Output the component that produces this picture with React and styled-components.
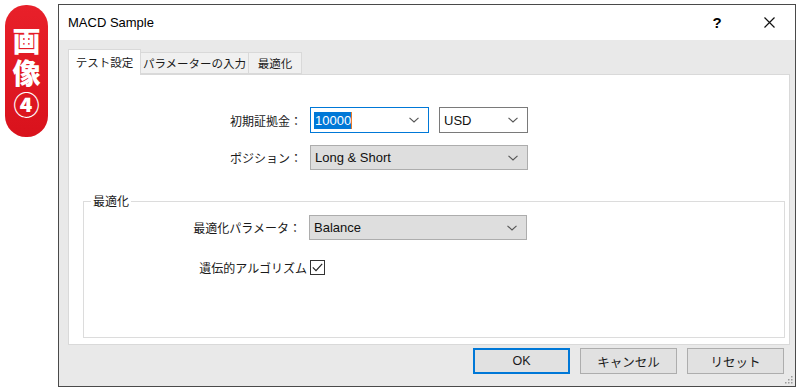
import React from "react";
import styled, { createGlobalStyle } from "styled-components";

const GlobalStyle = createGlobalStyle`
    body {
        margin: 0;
        background: #ffffff;
        font-family: "Liberation Sans", "Noto Sans CJK JP", sans-serif;
        color: #1a1a1a;
    }
`;

const Page = styled.div`
    display: flex;
    align-items: flex-start;
    padding: 4px 0 0 5px;
    gap: 10px;
    width: 800px;
    height: 391px;
    box-sizing: border-box;
`;

const Badge = styled.div`
    margin-top: 1px;
    width: 43px;
    height: 132px;
    border-radius: 21px;
    background: linear-gradient(#e8202a, #d9121c);
    color: #ffffff;
    display: flex;
    flex-direction: column;
    align-items: center;
    justify-content: center;
    gap: 2px;
    font-family: "Noto Sans CJK JP", sans-serif;
    font-weight: 900;
    font-size: 28px;
    line-height: 30px;
    padding-top: 2px;
    box-sizing: border-box;
`;

const BadgeChar = styled.span`
    display: block;
    height: 30px;
    font-size: ${(p) => p.$size ?? 28}px;
`;

const Window = styled.div`
    position: relative;
    width: 738px;
    height: 383px;
    border: 1px solid #4a4a4a;
    box-sizing: border-box;
    display: flex;
    flex-direction: column;
    background: #e9e9e9;
`;

const TitleBar = styled.div`
    height: 35px;
    background: #ffffff;
    display: flex;
    align-items: center;
    padding-left: 9px;
    font-size: 13px;
    color: #000;
`;

const TitleControls = styled.div`
    margin-left: auto;
    display: flex;
    align-items: center;
`;

const TitleButton = styled.div`
    width: 52px;
    height: 35px;
    display: flex;
    align-items: center;
    justify-content: center;
    font-size: 15px;
    font-weight: bold;
`;

const Body = styled.div`
    flex: 1;
    display: flex;
    flex-direction: column;
    padding: 9px 5px 12px 9px;
`;

const TabRow = styled.div`
    display: flex;
    align-items: flex-end;
    height: 26px;
    margin-bottom: -1px;
    position: relative;
    z-index: 1;
`;

const Tab = styled.div`
    width: ${(p) => p.$w}px;
    height: ${(p) => (p.$active ? 26 : 22)}px;
    margin-bottom: ${(p) => (p.$active ? 0 : 1)}px;
    box-sizing: border-box;
    border: 1px solid #d9d9d9;
    border-bottom: ${(p) => (p.$active ? "none" : "1px solid #d9d9d9")};
    margin-left: ${(p) => (p.$active ? 0 : -1)}px;
    background: ${(p) => (p.$active ? "#ffffff" : "#f0f0f0")};
    display: flex;
    align-items: center;
    justify-content: center;
    font-family: "Noto Sans CJK JP", sans-serif;
    font-size: 11.5px;
    color: #1a1a1a;
    padding-bottom: ${(p) => (p.$active ? 2 : 0)}px;
`;

const Panel = styled.div`
    flex: 1;
    background: #ffffff;
    border: 1px solid #d9d9d9;
    display: flex;
    flex-direction: column;
    padding-top: 32px;
`;

const Row = styled.div`
    display: flex;
    align-items: center;
    gap: ${(p) => p.$gap ?? 8}px;
    margin-top: ${(p) => p.$mt ?? 0}px;
`;

const Label = styled.div`
    width: ${(p) => p.$w}px;
    text-align: right;
    font-family: "Noto Sans CJK JP", sans-serif;
    font-size: 12px;
    color: #1a1a1a;
    white-space: nowrap;
`;

const Combo = styled.div`
    width: ${(p) => p.$w}px;
    height: ${(p) => p.$h ?? 25}px;
    box-sizing: border-box;
    display: flex;
    align-items: center;
    padding: 0 9px 0 4px;
    font-size: 13px;
    color: #111;
    border: 1px solid
        ${(p) => (p.$variant === "focus" ? "#0078d7" : p.$variant === "plain" ? "#7a7a7a" : "#adadad")};
    background: ${(p) => (p.$variant === "grey" ? "#dedede" : "#ffffff")};
    margin-left: ${(p) => p.$ml ?? 0}px;
    svg {
        margin-left: auto;
    }
`;

const Selected = styled.span`
    background: #0078d7;
    color: #ffffff;
    padding: 1px 0 1px 1px;
    border-right: 1px solid #e87a2a;
    margin-left: -1px;
`;

const Group = styled.fieldset`
    flex: 1;
    margin: 23px 4px 6px 14px;
    padding: 6px 0 0 0;
    border: 1px solid #dcdcdc;
    min-width: 0;
`;

const Legend = styled.legend`
    margin-left: 7px;
    padding: 0 2px;
    font-family: "Noto Sans CJK JP", sans-serif;
    font-size: 12px;
    line-height: 16px;
    color: #1a1a1a;
`;

const CheckBox = styled.div`
    width: 15px;
    height: 15px;
    box-sizing: border-box;
    border: 1px solid #333;
    background: #fff;
    display: flex;
    align-items: center;
    justify-content: center;
`;

const ButtonRow = styled.div`
    display: flex;
    justify-content: flex-end;
    gap: 10px;
    margin-top: 3px;
    padding-right: 6px;
`;

const Button = styled.div`
    width: 97px;
    height: 26px;
    box-sizing: border-box;
    border: ${(p) => (p.$primary ? "2px solid #0078d7" : "1px solid #adadad")};
    background: #e1e1e1;
    display: flex;
    align-items: center;
    justify-content: center;
    font-family: "Liberation Sans", "Noto Sans CJK JP", sans-serif;
    font-size: 12.5px;
    color: #1a1a1a;
`;

const Grip = styled.svg`
    position: absolute;
    right: 2px;
    bottom: 2px;
`;

function Chevron() {
    return (
        <svg width="10" height="6" viewBox="0 0 10 6">
            <polyline points="0.5,0.8 5,5 9.5,0.8" fill="none" stroke="#555" strokeWidth="1.1" />
        </svg>
    );
}

export default function App() {
    return (
        <>
            <GlobalStyle />
            <Page>
                <Badge>
                    <BadgeChar>画</BadgeChar>
                    <BadgeChar>像</BadgeChar>
                    <BadgeChar $size={26}>④</BadgeChar>
                </Badge>

                <Window>
                    <TitleBar>
                        MACD Sample
                        <TitleControls>
                            <TitleButton>?</TitleButton>
                            <TitleButton>
                                <svg width="11" height="11" viewBox="0 0 11 11">
                                    <path d="M0.5 0.5 L10.5 10.5 M10.5 0.5 L0.5 10.5" stroke="#111" strokeWidth="1.2" />
                                </svg>
                            </TitleButton>
                        </TitleControls>
                    </TitleBar>

                    <Body>
                        <TabRow>
                            <Tab $active $w={73}>
                                テスト設定
                            </Tab>
                            <Tab $w={109}>パラメーターの入力</Tab>
                            <Tab $w={54}>最適化</Tab>
                        </TabRow>

                        <Panel>
                            <Row>
                                <Label $w={233}>初期証拠金：</Label>
                                <Combo $w={119} $h={26} $variant="focus">
                                    <Selected>10000</Selected>
                                    <Chevron />
                                </Combo>
                                <Combo $w={89} $h={26} $ml={2} $variant="plain">
                                    USD
                                    <Chevron />
                                </Combo>
                            </Row>
                            <Row $mt={12}>
                                <Label $w={233}>ポジション：</Label>
                                <Combo $w={218} $variant="grey">
                                    Long &amp; Short
                                    <Chevron />
                                </Combo>
                            </Row>

                            <Group>
                                <Legend>最適化</Legend>
                                <Row>
                                    <Label $w={217}>最適化パラメータ：</Label>
                                    <Combo $w={218} $variant="grey">
                                        Balance
                                        <Chevron />
                                    </Combo>
                                </Row>
                                <Row $mt={19} $gap={3}>
                                    <Label $w={223}>遺伝的アルゴリズム</Label>
                                    <CheckBox>
                                        <svg width="11" height="9" viewBox="0 0 11 9">
                                            <polyline points="0.8,4.4 4,7.6 10.2,0.8" fill="none" stroke="#222" strokeWidth="1.2" />
                                        </svg>
                                    </CheckBox>
                                </Row>
                            </Group>
                        </Panel>

                        <ButtonRow>
                            <Button $primary>OK</Button>
                            <Button>キャンセル</Button>
                            <Button>リセット</Button>
                        </ButtonRow>
                    </Body>

                    <Grip width="8" height="8" viewBox="0 0 8 8">
                        <g fill="#9a9a9a">
                            <rect x="6" y="0" width="1.5" height="1.5" />
                            <rect x="3" y="3" width="1.5" height="1.5" />
                            <rect x="6" y="3" width="1.5" height="1.5" />
                            <rect x="0" y="6" width="1.5" height="1.5" />
                            <rect x="3" y="6" width="1.5" height="1.5" />
                            <rect x="6" y="6" width="1.5" height="1.5" />
                        </g>
                    </Grip>
                </Window>
            </Page>
        </>
    );
}
